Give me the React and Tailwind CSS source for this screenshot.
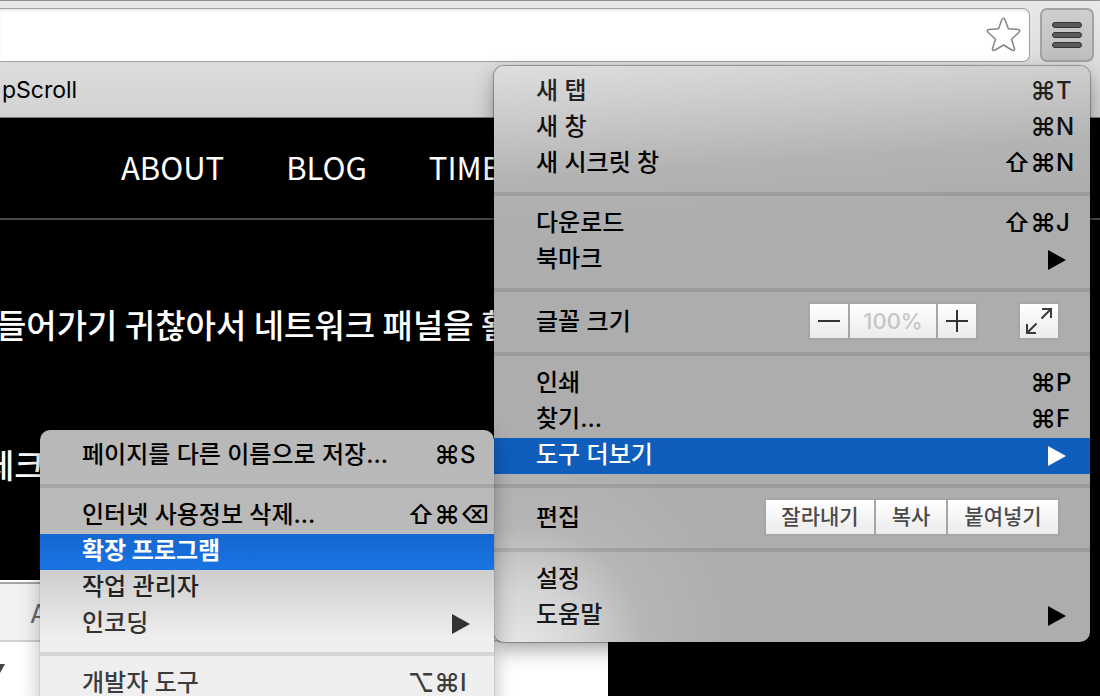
import React from "react";

const FONT = "font-['Inter','Noto_Sans_CJK_KR',sans-serif]";
const KOREAN = "font-['Noto_Sans_CJK_KR',sans-serif]";

function Separator() {
  return (
    <li role="separator" className="flex h-6 items-center">
      <span className="h-1 w-full bg-black/10" />
    </li>
  );
}

function Arrow() {
  return (
    <svg viewBox="0 0 18 20" className="mr-6 h-5 w-[18px]" fill="currentColor" aria-hidden="true">
      <path d="M0 0 18 10 0 20Z" />
    </svg>
  );
}

function Shortcut({ keys }) {
  const modifiers = keys.slice(0, -1);
  return (
    <span className="flex pb-0.5">
      {modifiers.map((k) => (
        <kbd key={k} className="flex w-[26px] justify-center font-[inherit] text-[26px]">{k}</kbd>
      ))}
      <kbd className="w-[34px] font-[inherit]">{keys[keys.length - 1]}</kbd>
    </span>
  );
}

function Item({ label, keys, arrow, tone = "text-black font-medium", children }) {
  return (
    <li role="none" className="relative">
      <button
        type="button"
        role="menuitem"
        className={"flex h-9 w-full items-center justify-between pl-[42px] text-left text-2xl leading-9 whitespace-nowrap " + tone}
      >
        <span className="pb-0.5">{label}</span>
        {keys && <Shortcut keys={keys} />}
        {arrow && <Arrow />}
      </button>
      {children}
    </li>
  );
}

function SegButton({ children, className, label }) {
  return (
    <button
      type="button"
      aria-label={label}
      className={"flex h-[34px] items-center justify-center bg-linear-to-b from-white to-[#ebebeb] text-[21px] leading-8 font-medium text-[#4a4a4a] " + className}
    >
      {children}
    </button>
  );
}

function ToolsMenu() {
  return (
    <ul
      role="menu"
      className="absolute -top-2 right-full z-10 w-[454px] rounded-[10px] bg-linear-to-b from-[#b8b8b8] from-0% via-[#bababa] via-35% to-[#efefef] to-75% py-2 shadow-[0_0_1px_rgba(0,0,0,0.6),0_6px_20px_rgba(0,0,0,0.3)]"
    >
      <Item label="페이지를 다른 이름으로 저장..." keys={["⌘", "S"]} />
      <Separator />
      <Item label="인터넷 사용정보 삭제..." keys={["⇧", "⌘", "⌫"]} />
      <Item label="확장 프로그램" tone="bg-linear-to-b from-[#1467d0] to-[#1a74e3] text-white font-bold" />
      <Item label="작업 관리자" tone="text-[#222] font-medium" />
      <Item label="인코딩" arrow tone="text-[#333] font-medium" />
      <Separator />
      <Item label="개발자 도구" keys={["⌥", "⌘", "I"]} tone="text-[#3c3c3c] font-medium" />
    </ul>
  );
}

function MainMenu() {
  return (
    <ul
      role="menu"
      className="absolute top-[66px] right-2.5 w-[596px] rounded-[10px] bg-[radial-gradient(circle_at_30px_580px,#e6e6e6_0,rgba(220,220,220,0.8)_60px,rgba(195,195,195,0.4)_120px,rgba(173,173,173,0)_220px),linear-gradient(176deg,#dedede_0,#cccccc_50px,#b3b3b3_115px,#adadad_170px)] py-2 shadow-[0_0_1px_1px_rgba(0,0,0,0.3),0_8px_20px_rgba(0,0,0,0.35)]"
    >
      <Item label="새 탭" keys={["⌘", "T"]} tone="text-[#222] font-medium" />
      <Item label="새 창" keys={["⌘", "N"]} tone="text-[#111] font-medium" />
      <Item label="새 시크릿 창" keys={["⇧", "⌘", "N"]} />
      <Separator />
      <Item label="다운로드" keys={["⇧", "⌘", "J"]} />
      <Item label="북마크" arrow />
      <Separator />
      <li role="none" className="flex h-10 items-start pr-[30px] pl-[42px] text-2xl font-medium">
        <span className="flex-1 leading-10">글꼴 크기</span>
        <div className="flex gap-0.5 border-2 border-[#a6a6a6] bg-[#a6a6a6]">
          <SegButton className="w-[38px]" label="축소">
            <svg viewBox="0 0 22 22" className="size-[22px]" stroke="#333" strokeWidth="2" aria-hidden="true"><path d="M0 11H22" /></svg>
          </SegButton>
          <output className="flex h-[34px] w-[86px] items-center justify-center bg-linear-to-b from-white to-[#ebebeb] pt-0.5 text-[22px] text-[#c6c6c6]">100%</output>
          <SegButton className="w-[38px]" label="확대">
            <svg viewBox="0 0 22 22" className="size-[22px]" stroke="#333" strokeWidth="2" aria-hidden="true"><path d="M0 11H22M11 0V22" /></svg>
          </SegButton>
        </div>
        <div className="ml-10 border-2 border-[#a6a6a6]">
          <SegButton className="w-[38px]" label="전체 화면">
            <svg viewBox="0 0 26 26" className="size-[26px]" stroke="#3a3a3a" strokeWidth="2" fill="none" aria-hidden="true">
              <path d="M16 1H25V10M25 1 15.500 10.500M1 16V25H10M1 25 10.500 15.500" />
            </svg>
          </SegButton>
        </div>
      </li>
      <Separator />
      <Item label="인쇄" keys={["⌘", "P"]} />
      <Item label="찾기..." keys={["⌘", "F"]} />
      <Item label="도구 더보기" arrow tone="bg-[#0f5ebc] text-white font-medium">
        <ToolsMenu />
      </Item>
      <Separator />
      <li role="none" className="flex h-10 items-start pr-[30px] pl-[42px] text-2xl font-medium">
        <span className="flex-1 leading-10">편집</span>
        <div className="flex gap-0.5 border-2 border-[#a6a6a6] bg-[#a6a6a6]">
          <SegButton className="w-[108px]">잘라내기</SegButton>
          <SegButton className="w-[70px]">복사</SegButton>
          <SegButton className="w-[110px]">붙여넣기</SegButton>
        </div>
      </li>
      <Separator />
      <Item label="설정" tone="text-[#111] font-medium" />
      <Item label="도움말" arrow tone="text-[#1a1a1a] font-medium [&>svg]:text-black" />
    </ul>
  );
}

function Toolbar() {
  return (
    <header className="border-b border-[#777] bg-linear-to-b from-[#e9e9e9] to-[#d2d2d2]">
      <div className="flex gap-2.5 border-t border-[#8f8f8f] pt-[7px] pr-1.5">
        <div className="flex h-[54px] flex-1 items-center rounded-r-[7px] border-y border-r border-[#a0a0a0] bg-white pr-2 shadow-[inset_0_2px_2px_rgba(0,0,0,0.08)]">
          <input type="text" aria-label="주소" className="h-full min-w-0 flex-1 bg-transparent outline-none" />
          <button type="button" aria-label="북마크에 추가">
            <svg viewBox="0 0 36 36" className="size-9" fill="#fff" stroke="#858585" strokeWidth="1.500" strokeLinejoin="round" aria-hidden="true">
              <path d="M16.700 2.900Q18.500 -.2 20.100 2.900L23.400 11.800L33 12.400Q36 13 33.800 15.500L26.500 22.200L29.500 31.400Q29.900 34.300 26.800 33L18.500 28L10.200 33Q7.100 34.300 7.500 31.400L10.500 22.200L3.200 15.500Q1 13 4 12.400L13.600 11.800Z" />
            </svg>
          </button>
        </div>
        <button type="button" aria-label="메뉴" className="flex size-[54px] flex-col items-center justify-center gap-1 rounded-[7px] border-2 border-[#a2a2a2] bg-linear-to-b from-[#cfcfcf] to-[#bfbfbf]">
          <span className="h-1.5 w-[30px] rounded-full border border-[#333] bg-[#5a5a5a]" />
          <span className="h-1.5 w-[30px] rounded-full border border-[#333] bg-[#5a5a5a]" />
          <span className="h-1.5 w-[30px] rounded-full border border-[#333] bg-[#5a5a5a]" />
        </button>
      </div>
      <a href="#snap" className="flex h-[55px] items-center pt-0.5 pl-0.5 text-[23px] text-black">pScroll</a>
    </header>
  );
}

export default function App() {
  return (
    <div className={"relative flex h-screen flex-col overflow-hidden bg-black " + FONT}>
      <Toolbar />
      <nav className={"flex h-[102px] shrink-0 items-center gap-[62px] border-b-2 border-[#4a4a4a] pb-0.5 pl-[121px] text-[31px] text-white " + KOREAN}>
        <a href="#about">ABOUT</a>
        <a href="#blog">BLOG</a>
        <a href="#timeline">TIME</a>
      </nav>
      <main className={"flex-1 pt-20 text-[33px] leading-[48px] font-medium whitespace-nowrap text-white " + KOREAN}>
        <p className="-ml-1">들어가기 귀찮아서 네트워크 패널을 활</p>
        <p className="mt-[92px] -ml-4">체크</p>
      </main>
      <section className="h-[116px] w-[608px] shrink-0 border-t-2 border-white bg-white text-[26px] text-[#666]">
        <div className="flex h-[60px] items-center border-y-2 border-t-[#a5a5a5] border-b-[#cfcfcf] bg-[#f2f2f2] pt-0.5 pl-[30px]">A</div>
        <svg viewBox="0 0 6 16" className="mt-[22px] h-4 w-1.5" fill="#444" aria-hidden="true"><path d="M0 0H5L0 9Z" /></svg>
      </section>
      <MainMenu />
    </div>
  );
}
